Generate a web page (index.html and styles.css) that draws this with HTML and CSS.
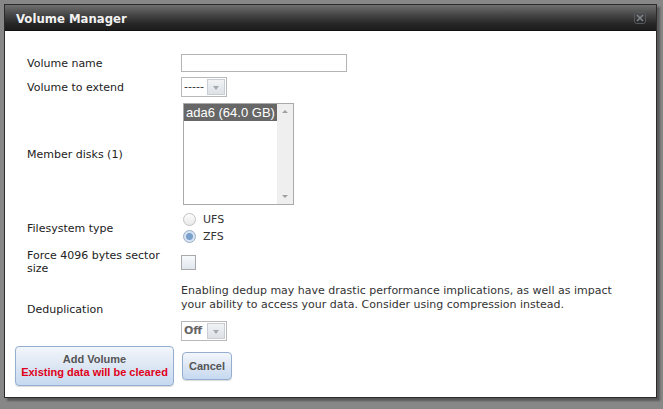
FILE: index.html
```html
<!DOCTYPE html>
<html lang="en">
<head>
    <meta charset="UTF-8">
    <title>Volume Manager</title>
    <link rel="stylesheet" href="styles.css">
</head>
<body>
    <div class="dialog">
        <div class="titlebar">
            <span class="title">Volume Manager</span>
            <svg class="close" width="12" height="12" viewBox="0 0 12 12">
                <rect x="0.5" y="0.5" width="11" height="11" rx="2" fill="none" stroke="#55595f"/>
                <path d="M3 3 L9 9 M9 3 L3 9" stroke="#80858e" stroke-width="1.5"/>
            </svg>
        </div>

        <div class="content">
            <div class="row row-name">
                <label class="label">Volume name</label>
                <input class="text-input" type="text">
            </div>

            <div class="row row-extend">
                <label class="label">Volume to extend</label>
                <div class="select">
                    <span class="select-value">-----</span>
                    <span class="select-arrow"></span>
                </div>
            </div>

            <div class="row row-disks">
                <label class="label">Member disks (1)</label>
                <div class="listbox">
                    <div class="list-items">
                        <div class="list-item selected">ada6 (64.0 GB)</div>
                    </div>
                    <div class="scrollbar">
                        <span class="scroll-up"></span>
                        <span class="scroll-down"></span>
                    </div>
                </div>
            </div>

            <div class="row row-fs">
                <label class="label">Filesystem type</label>
                <div class="radios">
                    <div class="radio-line"><span class="radio"></span>UFS</div>
                    <div class="radio-line"><span class="radio checked"></span>ZFS</div>
                </div>
            </div>

            <div class="row row-force">
                <label class="label">Force 4096 bytes sector size</label>
                <span class="checkbox"></span>
            </div>

            <div class="row row-dedup">
                <label class="label">Deduplication</label>
                <div class="dedup">
                    <p class="help">Enabling dedup may have drastic performance implications, as well as impact your ability to access your data. Consider using compression instead.</p>
                    <div class="select select-bold">
                        <span class="select-value">Off</span>
                        <span class="select-arrow"></span>
                    </div>
                </div>
            </div>

            <div class="actions">
                <button class="btn btn-add">Add Volume<span class="warn">Existing data will be cleared</span></button>
                <button class="btn btn-cancel">Cancel</button>
            </div>
        </div>
    </div>
</body>
</html>
```

FILE: styles.css
```css
body {
    margin: 0;
    padding: 4px;
    background: #878787;
    font-family: "DejaVu Sans", Verdana, sans-serif;
    font-size: 11px;
    color: #222;
}
.dialog {
    width: 653px;
    height: 394px;
    box-sizing: border-box;
    border: 1px solid #2b2b2b;
    background: white;
    box-shadow: 3px 3px 2px rgba(0,0,0,0.35);
    display: flex;
    flex-direction: column;
}
.titlebar {
    height: 25px;
    flex: none;
    display: flex;
    align-items: center;
    justify-content: space-between;
    padding: 0 10px 0 11px;
    background: linear-gradient(#707070, #4a4a4a 35%, #262626 75%, #1c1c1c);
    border-bottom: 1px solid #111;
}
.title {
    color: #f2f2f2;
    font-family: "DejaVu Sans Condensed", "DejaVu Sans", sans-serif;
    font-weight: bold;
    font-size: 13px;
    padding-top: 1px;
}
.close { margin-top: 1px; }

.content {
    padding: 23px 0 0 10px;
}
.row {
    display: flex;
    align-items: center;
    padding-left: 12px;
}
.label {
    width: 154px;
    flex: none;
    line-height: 13px;
}
.text-input {
    width: 166px;
    height: 18px;
    box-sizing: border-box;
    border: 1px solid #b4b4b4;
    margin: 0;
    padding: 0 3px;
}
.row-extend { margin-top: 5px; }
.row-disks { margin-top: 6px; }
.row-fs { margin-top: 6px; }
.row-force { margin-top: 4px; }
.row-dedup { margin-top: 9px; }

/* select widget */
.select {
    display: flex;
    width: 46px;
    height: 20px;
    box-sizing: border-box;
    border: 1px solid #b9b9b9;
    padding: 1px;
}
.select-value {
    flex: 1;
    line-height: 16px;
    padding-left: 1px;
    color: #333;
}
.select-arrow {
    width: 18px;
    border: 1px solid #c9ced4;
    background: linear-gradient(#f1f3f5, #dde1e6);
    box-sizing: border-box;
    position: relative;
}
.select-arrow::after {
    content: "";
    position: absolute;
    left: 5px;
    top: 6px;
    border-left: 3px solid transparent;
    border-right: 3px solid transparent;
    border-top: 4px solid #a3a9b1;
}
.select-bold .select-value {
    font-weight: bold;
    color: #666;
}

/* listbox */
.listbox {
    display: flex;
    width: 111px;
    height: 102px;
    box-sizing: border-box;
    border: 1px solid #aaa;
    margin-left: 2px;
}
.list-items { flex: 1; }
.list-item {
    font-family: "Liberation Sans", Arial, sans-serif;
    font-size: 13px;
    line-height: 17px;
    padding-left: 2px;
}
.list-item.selected {
    background: #676767;
    color: white;
}
.scrollbar {
    width: 16px;
    background: #efefef;
    display: flex;
    flex-direction: column;
    justify-content: space-between;
    align-items: center;
    padding: 6px 0;
}
.scroll-up {
    border-left: 3px solid transparent;
    border-right: 3px solid transparent;
    border-bottom: 3px solid #a0a0a0;
}
.scroll-down {
    border-left: 3px solid transparent;
    border-right: 3px solid transparent;
    border-top: 3px solid #a0a0a0;
}

/* radios and checkbox */
.radios { margin-left: 2px; }
.radio-line {
    display: flex;
    align-items: center;
    height: 17px;
    color: #333;
}
.radio {
    flex: none;
    width: 11px;
    height: 11px;
    border: 1px solid #c2c2c2;
    border-radius: 50%;
    background: linear-gradient(#fdfdfd, #e9e9e9);
    margin-right: 7px;
}
.radio.checked {
    border-color: #9ab0c8;
    background: radial-gradient(circle, #7aa0cc 0, #7aa0cc 3px, #d7e3f1 4px);
}
.checkbox {
    width: 13px;
    height: 13px;
    border: 1px solid #a9a9a9;
    background: linear-gradient(#f7f9fb, #e1e7ef);
}

/* dedup */
.row-dedup .label { margin-bottom: 6px; }
.help {
    margin: 0;
    line-height: 14px;
    width: 452px;
    color: #333;
}
.dedup .select { margin-top: 9px; }

/* buttons */
.actions {
    display: flex;
    align-items: center;
    gap: 8px;
    margin-top: 5px;
}
.btn {
    border: 1px solid #93aecf;
    border-radius: 4px;
    background: linear-gradient(#f3f6fb, #dfe8f4 45%, #c6d9f0);
    box-shadow: 0 1px 1px rgba(0,0,0,0.15);
    font-family: "Liberation Sans", Tahoma, sans-serif;
    font-weight: bold;
    font-size: 11px;
    color: #555;
    cursor: pointer;
    padding: 0;
}
.btn-add {
    width: 159px;
    height: 40px;
    line-height: 13px;
}
.warn {
    display: block;
    color: #e0001a;
}
.btn-cancel {
    width: 50px;
    height: 28px;
}
```
